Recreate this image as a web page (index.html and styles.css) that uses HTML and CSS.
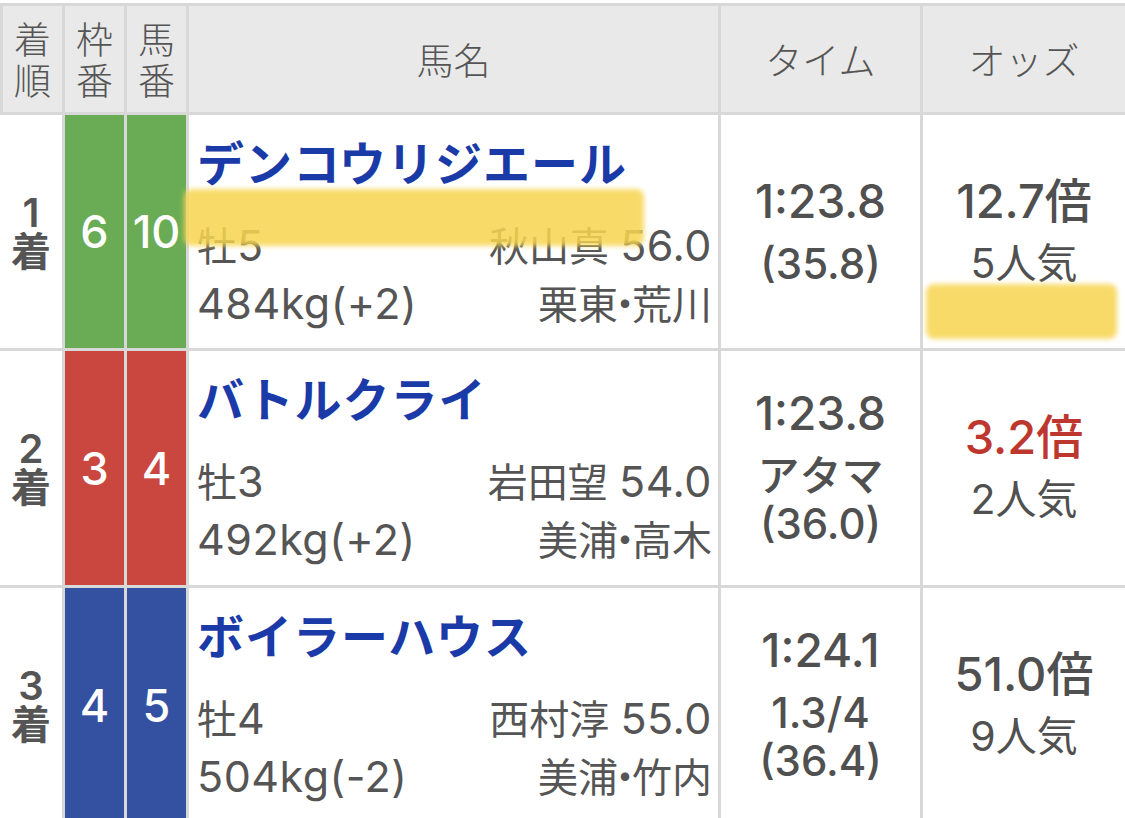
FILE: index.html
```html
<!DOCTYPE html>
<html lang="ja">
<head>
<meta charset="utf-8">
<title>レース結果</title>
<link rel="stylesheet" href="styles.css">
</head>
<body>
<div class="table">
  <div class="th th-first"><span class="stack"><span>着</span><span>順</span></span></div>
  <div class="th"><span class="stack"><span>枠</span><span>番</span></span></div>
  <div class="th"><span class="stack"><span>馬</span><span>番</span></span></div>
  <div class="th">馬名</div>
  <div class="th">タイム</div>
  <div class="th">オッズ</div>

  <div class="td rank">1<br>着</div>
  <div class="td waku green">6</div>
  <div class="td waku green">10</div>
  <div class="td horse">
    <div class="name">デンコウリジエール</div>
    <div class="detail"><span>牡<span class="num">5</span></span><span>秋山真 <span class="num">56.0</span></span></div>
    <div class="detail"><span class="num">484kg(+2)</span><span>栗東<span class="sep">・</span>荒川</span></div>
  </div>
  <div class="td time"><div class="main">1:23.8</div><div class="sub">(35.8)</div></div>
  <div class="td odds"><div class="main">12.7倍</div><div class="sub">5人気</div></div>

  <div class="td rank">2<br>着</div>
  <div class="td waku red">3</div>
  <div class="td waku red">4</div>
  <div class="td horse">
    <div class="name">バトルクライ</div>
    <div class="detail"><span>牡<span class="num">3</span></span><span>岩田望 <span class="num">54.0</span></span></div>
    <div class="detail"><span class="num">492kg(+2)</span><span>美浦<span class="sep">・</span>高木</span></div>
  </div>
  <div class="td time"><div class="main">1:23.8</div><div class="sub">アタマ</div><div class="sub">(36.0)</div></div>
  <div class="td odds"><div class="main fav">3.2倍</div><div class="sub">2人気</div></div>

  <div class="td rank">3<br>着</div>
  <div class="td waku blue">4</div>
  <div class="td waku blue">5</div>
  <div class="td horse">
    <div class="name">ボイラーハウス</div>
    <div class="detail"><span>牡<span class="num">4</span></span><span>西村淳 <span class="num">55.0</span></span></div>
    <div class="detail"><span class="num">504kg(-2)</span><span>美浦<span class="sep">・</span>竹内</span></div>
  </div>
  <div class="td time"><div class="main">1:24.1</div><div class="sub">1.3/4</div><div class="sub">(36.4)</div></div>
  <div class="td odds"><div class="main">51.0倍</div><div class="sub">9人気</div></div>

  <div class="marker marker-name"></div>
  <div class="marker marker-odds"></div>
</div>
</body>
</html>
```

FILE: styles.css
```css
html, body {
  margin: 0;
  padding: 0;
  background: #ffffff;
  overflow: hidden;
}

body {
  font-family: "Inter", "Noto Sans CJK JP", sans-serif;
  color: #525252;
}

.table {
  position: relative;
  display: grid;
  grid-template-columns: 62px 59px 59px 529px 199px 1fr;
  grid-template-rows: 106px 233px 234px 234px;
  gap: 3px;
  margin-top: 3px;
  padding-top: 3px;
  background: #d8d8d8;
}

.th {
  background: #e9e9e9;
  display: flex;
  align-items: center;
  justify-content: center;
  text-align: center;
  font-family: "Noto Sans CJK JP", sans-serif;
  font-size: 37px;
  line-height: 41px;
  font-weight: 300;
  color: #555555;
}

.stack {
  display: flex;
  flex-direction: column;
  align-items: center;
}

.stack span {
  display: block;
  height: 41px;
  line-height: 41px;
}

.th-first {
  margin-left: 3px;
}

.td {
  background: #ffffff;
}

.rank {
  display: flex;
  align-items: center;
  justify-content: center;
  text-align: center;
  font-size: 40px;
  line-height: 39px;
  font-weight: 600;
  color: #555555;
}

.waku {
  display: flex;
  align-items: center;
  justify-content: center;
  color: #ffffff;
  font-size: 45px;
  font-weight: 500;
}

.green { background: #6aac55; }
.red { background: #c9473e; }
.blue { background: #3451a1; }

.horse {
  padding: 11px 6px 0 8px;
}

.name {
  font-family: "Noto Sans CJK JP", sans-serif;
  font-size: 47px;
  line-height: 70px;
  font-weight: 700;
  letter-spacing: 1px;
  color: #1a3aa8;
  white-space: nowrap;
  margin-bottom: 21px;
}

.detail {
  display: flex;
  justify-content: space-between;
  align-items: baseline;
  font-size: 40px;
  line-height: 56px;
  color: #555555;
  white-space: nowrap;
}

.num {
  font-size: 43px;
  letter-spacing: 0.5px;
}

.sep {
  font-feature-settings: "palt";
  margin: 0 -3px;
}

.time,
.odds {
  display: flex;
  flex-direction: column;
  align-items: center;
  justify-content: center;
  color: #505050;
  white-space: nowrap;
}

.time .main {
  font-size: 46px;
  line-height: 50px;
  font-weight: 500;
  margin-bottom: 14px;
}

.time .sub {
  font-size: 42px;
  line-height: 48px;
  font-weight: 500;
}

.odds .main {
  font-size: 47px;
  line-height: 50px;
  font-weight: 500;
  margin-bottom: 12px;
}

.odds .sub {
  font-size: 41px;
  line-height: 50px;
  font-weight: 400;
}

.odds .fav {
  color: #be372e;
}

.marker {
  position: absolute;
  background: #f7d550;
  opacity: 0.86;
  border-radius: 8px;
  filter: blur(2.5px);
}

.marker-name {
  left: 184px;
  top: 186px;
  width: 460px;
  height: 57px;
}

.marker-odds {
  left: 926px;
  top: 281px;
  width: 191px;
  height: 55px;
}
```
